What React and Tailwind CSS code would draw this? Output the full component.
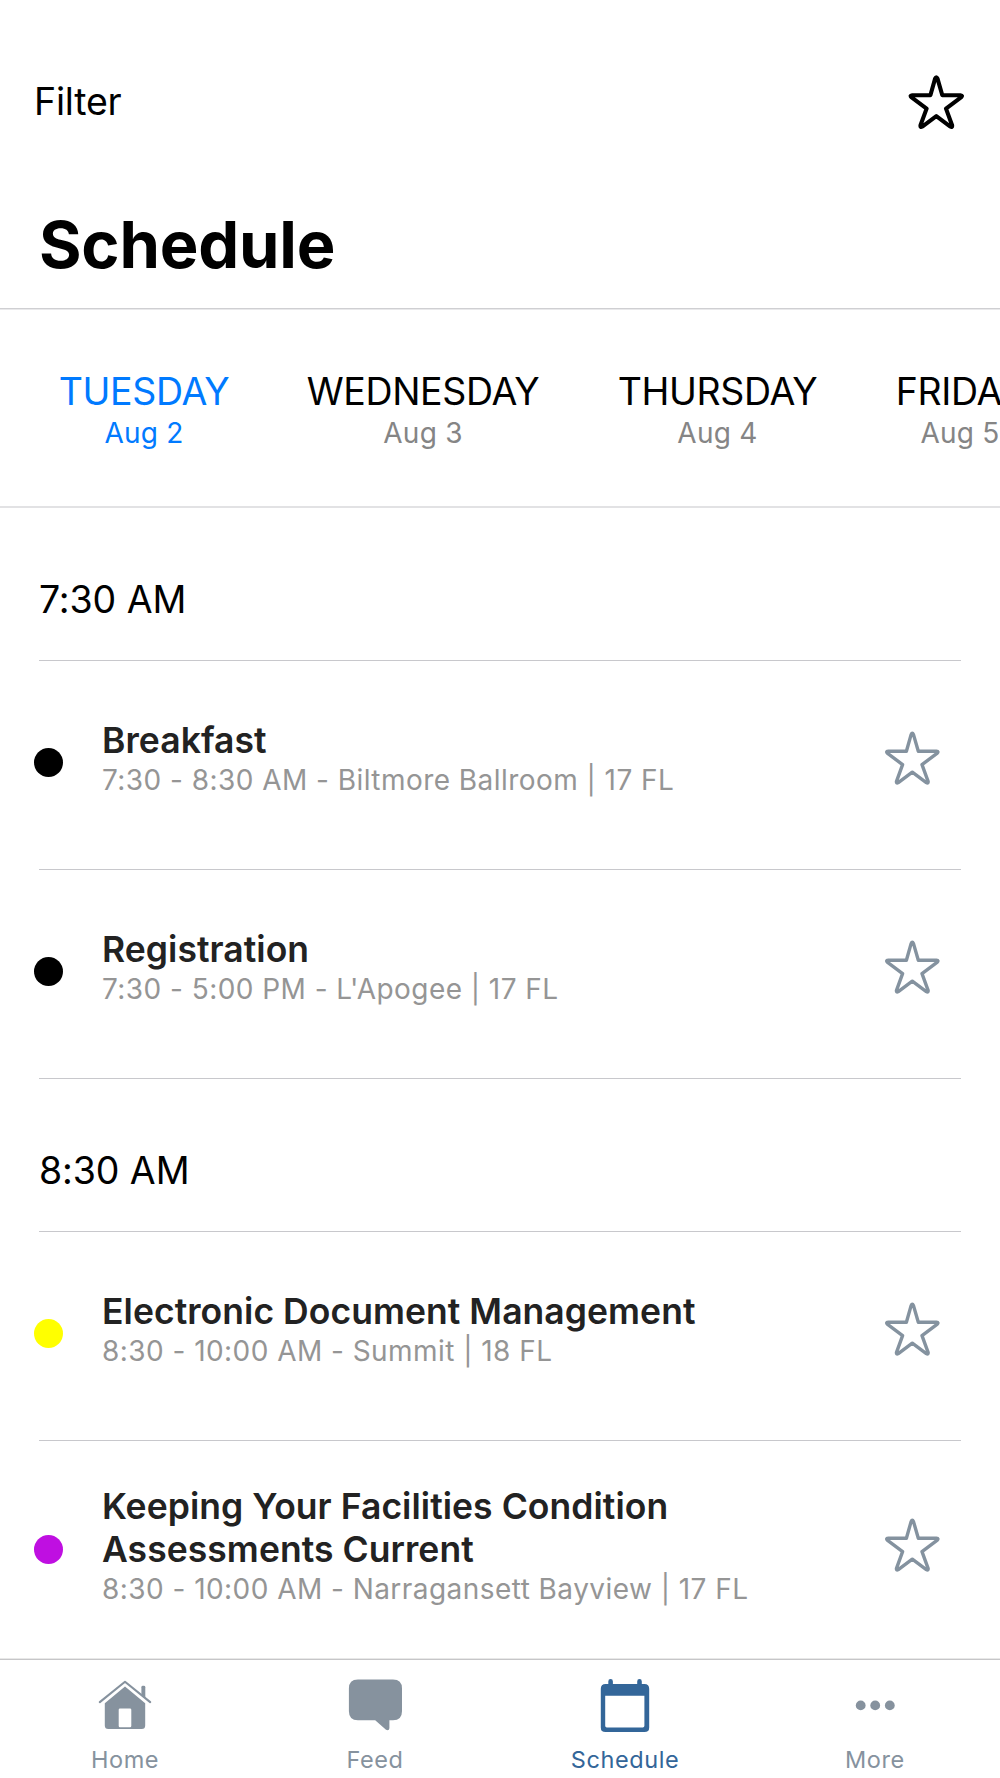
// src/App.jsx

import React, { useState } from 'react';

const days = [
    { name: 'TUESDAY', date: 'Aug 2', width: 'w-[168px]' },
    { name: 'WEDNESDAY', date: 'Aug 3', width: 'w-[230px]' },
    { name: 'THURSDAY', date: 'Aug 4', width: 'w-[199px]' },
    { name: 'FRIDAY', date: 'Aug 5', width: 'w-[126px]' }
];

const slots = [
    {
        time: '7:30 AM',
        sessions: [
            { title: ['Breakfast'], info: '7:30 - 8:30 AM - Biltmore Ballroom | 17 FL', dot: 'bg-black' },
            { title: ['Registration'], info: "7:30 - 5:00 PM - L'Apogee | 17 FL", dot: 'bg-black' }
        ]
    },
    {
        time: '8:30 AM',
        sessions: [
            { title: ['Electronic Document Management'], info: '8:30 - 10:00 AM - Summit | 18 FL', dot: 'bg-[#ffff00]' },
            {
                title: ['Keeping Your Facilities Condition', 'Assessments Current'],
                info: '8:30 - 10:00 AM - Narragansett Bayview | 17 FL',
                dot: 'bg-[#bf0fe1]'
            }
        ]
    }
];

const StarIcon = ({ className, strokeWidth }) => (
    <svg viewBox="0 0 56 55" className={`w-14 h-[55px] shrink-0 ${className}`} fill="none" stroke="currentColor" strokeWidth={strokeWidth} strokeLinejoin="round">
        <path d="M22.4 20.2 27.1 3.6Q28.3 .8 29.5 3.6L34.3 20.2H52.4Q55.2 20.5 53 22.4L38 33.6 44.1 50.3Q44.5 52.9 42.3 51.6L28.3 41.2 14.3 51.6Q12.1 52.9 12.5 50.3L18.6 33.6 3.6 22.4Q1.4 20.5 4.2 20.2Z" />
    </svg>
);

const HomeIcon = () => (
    <svg viewBox="0 0 54 54" className="w-[54px] h-[54px]" fill="currentColor">
        <path d="M27 7.6 47.2 24.2V46.5Q47.2 50 43.7 50H10.3Q6.8 50 6.8 46.5V24.2ZM22 29.4Q20.7 29.4 20.7 30.7V46.9Q20.7 48.2 22 48.2H32Q33.3 48.2 33.3 46.9V30.7Q33.3 29.4 32 29.4Z" fillRule="evenodd" />
        <path d="M43.4 15.8V8.2Q43.4 6.8 44.8 6.8H45.9Q47.3 6.8 47.3 8.2V19Z" />
        <path d="M1.8 23.1 27 2.8 52.2 23.1" fill="none" stroke="currentColor" strokeWidth="2.1" strokeLinecap="round" strokeLinejoin="round" />
    </svg>
);

const FeedIcon = () => (
    <svg viewBox="0 0 54 54" className="w-[54px] h-[54px]" fill="currentColor">
        <path d="M9.5 .4H45Q54 .4 54 9.4V32.2Q54 41.2 45 41.2H41.4V49.2Q41 52.3 38 50.8L27.2 41.2H9.9Q.9 41.2 .9 32.2V9.4Q.9 .4 9.9 .4Z" />
    </svg>
);

const ScheduleIcon = () => (
    <svg viewBox="0 0 54 54" className="w-[54px] h-[54px]" fill="currentColor">
        <path d="M7.5 5H10.3V2.4A2.3 2.4 0 0 1 14.9 2.4V5H39.2V2.4A2.3 2.4 0 0 1 43.8 2.4V5H46.5Q51.2 5 51.2 9.7V48.4Q51.2 53 46.5 53H7.5Q2.8 53 2.8 48.4V9.7Q2.8 5 7.5 5ZM7.2 16.7V46.8Q7.2 48.4 8.8 48.4H44.8Q46.4 48.4 46.4 46.8V16.7Z" fillRule="evenodd" />
    </svg>
);

const MoreIcon = () => (
    <svg viewBox="0 0 54 54" className="w-[54px] h-[54px]" fill="currentColor">
        <circle cx="12.7" cy="26.4" r="4.9" />
        <circle cx="27.2" cy="26.4" r="4.9" />
        <circle cx="41.8" cy="26.4" r="4.9" />
    </svg>
);

const tabs = [
    { name: 'Home', Icon: HomeIcon },
    { name: 'Feed', Icon: FeedIcon },
    { name: 'Schedule', Icon: ScheduleIcon },
    { name: 'More', Icon: MoreIcon }
];

// Session row: colour dot, title, time and room, favourite star
const SessionRow = ({ session }) => {
    const isLong = session.title.length > 1;

    return (
        <div className={`flex items-start pl-[34px] pr-[60px] ${isLong ? 'h-[218px] pt-[44px]' : 'h-[208px] pt-[58px]'}`}>
            <div className={`w-[29px] h-[29px] rounded-full shrink-0 ${session.dot} ${isLong ? 'mt-[50px]' : 'mt-[29px]'}`}></div>
            <div className="ml-[39px] flex-1 whitespace-nowrap">
                <h3 className="text-[35.5px] leading-[43px] font-semibold text-[#222222] tracking-[0.05px]">
                    {session.title.map((line) => (
                        <span key={line} className="block">{line}</span>
                    ))}
                </h3>
                <p className="text-[28px] leading-[36px] text-[#959595] tracking-[0.45px]">{session.info}</p>
            </div>
            <StarIcon strokeWidth="3.4" className={`text-[#84929f] ${isLong ? 'mt-[33px]' : 'mt-[12px]'}`} />
        </div>
    );
};

const App = () => {
    const [activeDay, setActiveDay] = useState('TUESDAY');
    const [activeTab, setActiveTab] = useState('Schedule');

    return (
        <div className="w-[1000px] h-[1778px] bg-white overflow-hidden flex flex-col font-['Inter',sans-serif] text-black">
            {/* Header */}
            <header className="h-[309px] shrink-0 border-b border-[#cfcfd2] pt-[75px]">
                <div className="flex items-start justify-between pl-[34px] pr-9">
                    <button className="mt-[7px] text-[37.5px] leading-10 tracking-[-0.2px]">Filter</button>
                    <StarIcon strokeWidth="4.1" className="text-black" />
                </div>
                <h1 className="mt-[75px] pl-[39px] text-[65px] leading-[80px] font-bold tracking-[-0.2px]">Schedule</h1>
            </header>

            {/* Day picker */}
            <div className="h-[199px] shrink-0 border-t border-t-[#e9e9eb] border-b-2 border-b-[#e2e2e4] pt-[62px] pl-[60px] flex gap-20 overflow-hidden">
                {days.map((day) => (
                    <button
                        key={day.name}
                        onClick={() => setActiveDay(day.name)}
                        className={`shrink-0 flex flex-col items-center whitespace-nowrap ${day.width} ${activeDay === day.name ? 'text-[#007aff]' : 'text-black'}`}
                    >
                        <span className="text-[37.5px] leading-10 tracking-[-0.35px]">{day.name}</span>
                        <span className={`mt-[3px] text-[28px] leading-9 tracking-[0.25px] ${activeDay === day.name ? '' : 'text-[#858585]'}`}>{day.date}</span>
                    </button>
                ))}
            </div>

            {/* Session list */}
            <main className="flex-1 min-h-0 overflow-hidden">
                {slots.map((slot) => (
                    <section key={slot.time}>
                        <h2 className="h-[152px] pt-[71px] pl-[39px] text-[37.5px] leading-[41px] tracking-[-0.1px]">{slot.time}</h2>
                        {slot.sessions.map((session) => (
                            <div key={session.info}>
                                <div className="mx-[39px] h-px bg-[#c8c8cc]"></div>
                                <SessionRow session={session} />
                            </div>
                        ))}
                        <div className="mx-[39px] h-px bg-[#c8c8cc]"></div>
                    </section>
                ))}
            </main>

            {/* Bottom navigation */}
            <nav className="h-[120px] shrink-0 border-t border-[#e8e8e8] grid grid-cols-4 bg-white">
                {tabs.map(({ name, Icon }) => (
                    <button
                        key={name}
                        onClick={() => setActiveTab(name)}
                        className={`flex flex-col items-center border-t border-[#c6c6c8] pt-[19px] ${activeTab === name ? 'text-[#336699]' : 'text-[#86929e]'}`}
                    >
                        <Icon />
                        <span className="mt-[13px] text-[23.5px] leading-7 tracking-[0.6px]">{name}</span>
                    </button>
                ))}
            </nav>
        </div>
    );
};

export default App;
